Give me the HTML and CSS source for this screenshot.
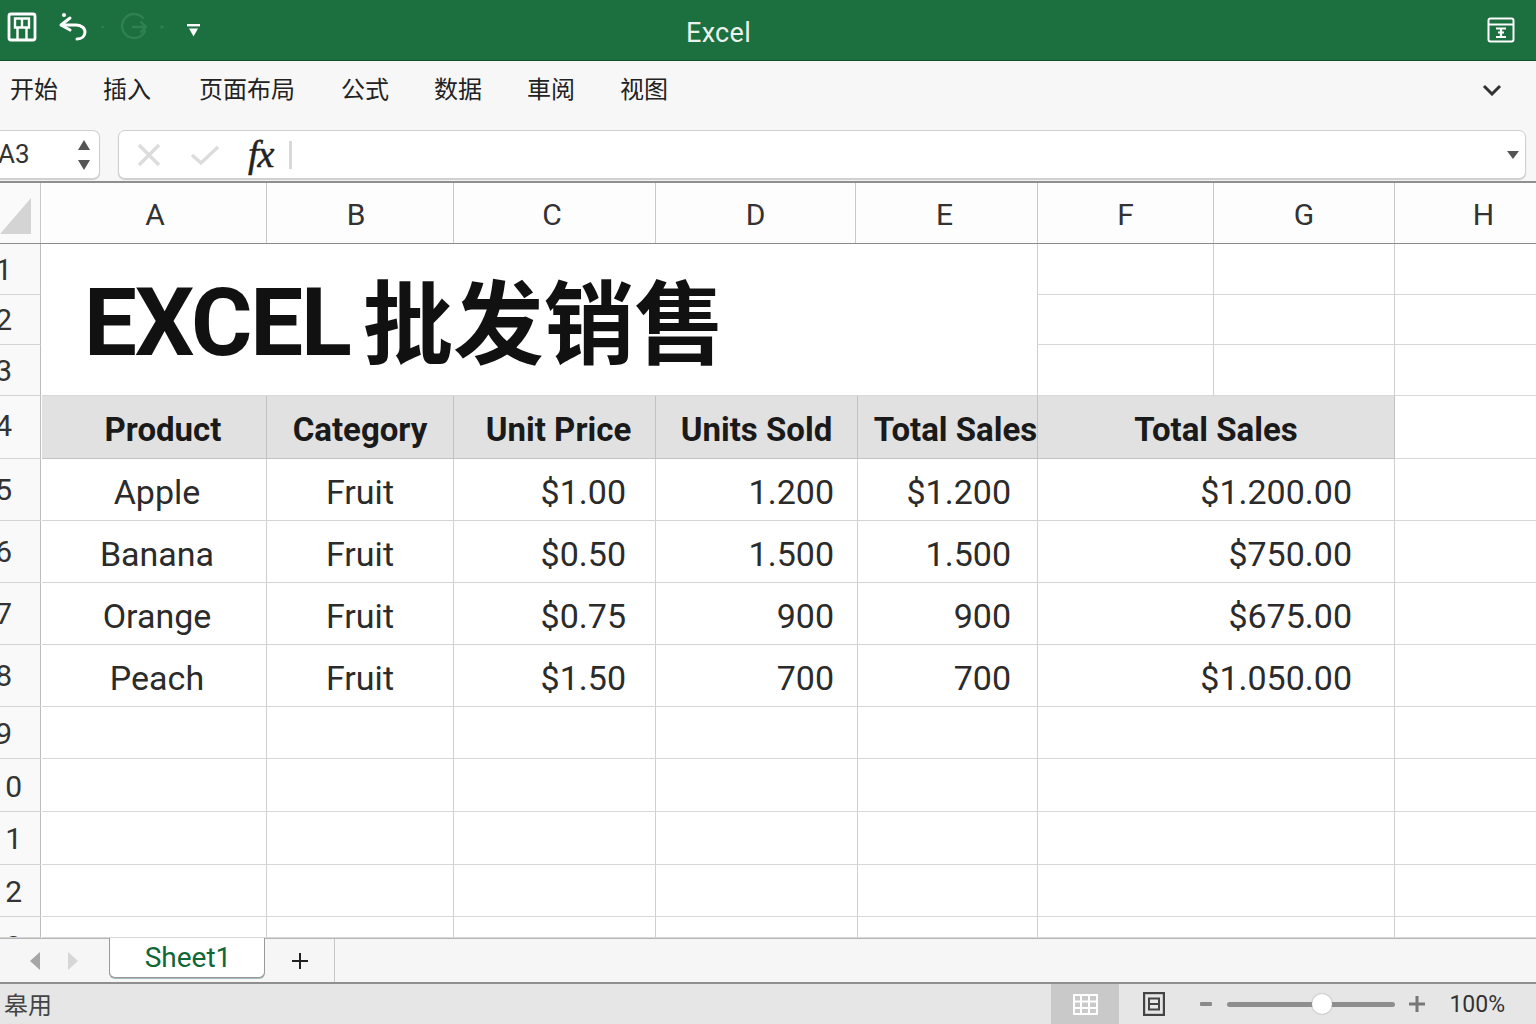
FILE: index.html
```html
<!DOCTYPE html>
<html lang="zh">
<head>
<meta charset="utf-8">
<title>Excel</title>
<link rel="stylesheet" href="styles.css">
</head>
<body>
<div class="app">
  <header class="titlebar">
    <div class="qat">
      <svg class="ic-save" width="30" height="30" viewBox="0 0 30 30" fill="none" stroke="#fff" stroke-width="2.800"><rect x="2" y="2" width="26" height="26" rx="2"/><path d="M8 6.500h14v9H8zM15 6.500v9" stroke-width="2.400"/><path d="M10.500 16v12M19.500 16v12" stroke-width="2.400"/></svg>
      <svg class="ic-undo" width="30" height="30" viewBox="0 0 30 30" fill="none" stroke="#fff" stroke-width="3" stroke-linecap="round" stroke-linejoin="round"><circle cx="6" cy="3" r="2" fill="#fff" stroke="none"/><path d="M12 6 3 13l9 5"/><path d="M4 13h14c5 0 9 3 9 7s-3 7-8 7"/></svg>
      <svg class="ic-redo" width="64" height="30" viewBox="0 0 64 30" fill="none" stroke="#2f8152" stroke-width="2.400" stroke-linecap="round"><path d="M1 15h1" stroke-width="2"/><path d="M42 6a12 12 0 1 0 2 13"/><path d="M32 15h12M40 10l5 5-5 5"/><path d="M60 14l2 1-2 1" stroke-width="1.600"/></svg>
      <svg class="ic-more" width="14" height="14" viewBox="0 0 14 14" fill="#fff"><rect x="0" y="0" width="13" height="2.400"/><path d="M2 4.500h9l-4.500 8z"/></svg>
    </div>
    <div class="appname">Excel</div>
    <svg class="ic-win" width="28" height="26" viewBox="0 0 28 26" fill="none" stroke="#fff" stroke-width="2"><rect x="1.500" y="1.500" width="25" height="23" rx="2"/><path d="M2 7.500h24"/><path d="M9 11.500h10M9 20h10M14 11.500V20M11 15.500h6" stroke-width="2.200"/></svg>
  </header>

  <nav class="ribbon">
    <span>开始</span><span>插入</span><span class="rb-wide">页面布局</span><span class="rb-nudge">公式</span><span>数据</span><span>車阅</span><span>视图</span>
    <svg class="ic-chevron" width="20" height="12" viewBox="0 0 20 12" fill="none" stroke="#333" stroke-width="3"><path d="M2 2l8 8 8-8"/></svg>
  </nav>

  <div class="formula-row">
    <div class="namebox">
      <span class="cellref">A3</span>
      <svg width="14" height="32" viewBox="0 0 14 32" fill="#555"><path d="M7 1l6 10H1zM1 21h12L7 31z"/></svg>
    </div>
    <div class="formula">
      <svg class="ic-x" width="26" height="24" viewBox="0 0 26 24" fill="none" stroke="#dcdcdc" stroke-width="3.400"><path d="M3 2l20 20M23 2 3 22"/></svg>
      <svg class="ic-check" width="30" height="20" viewBox="0 0 30 20" fill="none" stroke="#dcdcdc" stroke-width="3.400"><path d="M2 10l9 8L28 2"/></svg>
      <span class="fx">fx</span>
      <span class="caret"></span>
      <svg class="ic-drop" width="12" height="8" viewBox="0 0 12 8" fill="#555"><path d="M0 0h12L6 8z"/></svg>
    </div>
  </div>

  <div class="colheads">
    <div class="corner"><svg width="32" height="36" viewBox="0 0 32 36" fill="#d4d4d4"><path d="M31 0v36H0z"/></svg></div>
    <div class="ch a">A</div><div class="ch b">B</div><div class="ch c">C</div><div class="ch d">D</div><div class="ch e">E</div><div class="ch f">F</div><div class="ch g">G</div><div class="ch h">H</div>
  </div>

  <main class="sheet">
    <div class="rh">1</div>
    <div class="title"><span class="title-lat">EXCEL</span><span class="title-cjk">批发销售</span></div>
    <div class="gc"></div><div class="gc"></div><div class="gc nr"></div>
    <div class="rh">2</div>
    <div class="gc"></div><div class="gc"></div><div class="gc nr"></div>
    <div class="rh">3</div>
    <div class="gc"></div><div class="gc"></div><div class="gc nr"></div>

    <div class="rh up">4</div>
    <div class="hd pa">Product</div><div class="hd">Category</div><div class="hd pc">Unit Price</div><div class="hd">Units Sold</div><div class="hd pe">Total Sales</div><div class="hd span2">Total Sales</div><div class="gc nr"></div>

    <div class="rh">5</div>
    <div class="cell ctr">Apple</div><div class="cell ctr2">Fruit</div><div class="cell price">$1.00</div><div class="cell qty">1.200</div><div class="cell tot">$1.200</div><div class="cell span2 usd">$1.200.00</div><div class="gc nr"></div>
    <div class="rh">6</div>
    <div class="cell ctr">Banana</div><div class="cell ctr2">Fruit</div><div class="cell price">$0.50</div><div class="cell qty">1.500</div><div class="cell tot">1.500</div><div class="cell span2 usd">$750.00</div><div class="gc nr"></div>
    <div class="rh">7</div>
    <div class="cell ctr">Orange</div><div class="cell ctr2">Fruit</div><div class="cell price">$0.75</div><div class="cell qty">900</div><div class="cell tot">900</div><div class="cell span2 usd">$675.00</div><div class="gc nr"></div>
    <div class="rh">8</div>
    <div class="cell ctr">Peach</div><div class="cell ctr2">Fruit</div><div class="cell price">$1.50</div><div class="cell qty">700</div><div class="cell tot">700</div><div class="cell span2 usd">$1.050.00</div><div class="gc nr"></div>

    <div class="rh dn">9</div>
    <div class="gc"></div><div class="gc"></div><div class="gc"></div><div class="gc"></div><div class="gc"></div><div class="gc span2"></div><div class="gc nr"></div>
    <div class="rh two dn">10</div>
    <div class="gc"></div><div class="gc"></div><div class="gc"></div><div class="gc"></div><div class="gc"></div><div class="gc span2"></div><div class="gc nr"></div>
    <div class="rh two">11</div>
    <div class="gc"></div><div class="gc"></div><div class="gc"></div><div class="gc"></div><div class="gc"></div><div class="gc span2"></div><div class="gc nr"></div>
    <div class="rh two dn">12</div>
    <div class="gc"></div><div class="gc"></div><div class="gc"></div><div class="gc"></div><div class="gc"></div><div class="gc span2"></div><div class="gc nr"></div>
    <div class="rh two low">13</div>
    <div class="gc"></div><div class="gc"></div><div class="gc"></div><div class="gc"></div><div class="gc"></div><div class="gc span2"></div><div class="gc nr"></div>
  </main>

  <div class="tabsbar">
    <div class="tabnav">
      <svg width="12" height="18" viewBox="0 0 12 18" fill="#a6a6a6"><path d="M11 0v18L1 9z"/></svg>
      <svg width="12" height="18" viewBox="0 0 12 18" fill="#d6d6d6"><path d="M1 0v18l10-9z"/></svg>
    </div>
    <div class="tab">Sheet1</div>
    <div class="addtab">
      <svg width="16" height="16" viewBox="0 0 16 16" stroke="#222" stroke-width="2"><path d="M0 8h16M8 0v16"/></svg>
    </div>
  </div>

  <footer class="status">
    <span class="ready">皋用</span>
    <div class="viewbtn">
      <svg width="25" height="21" viewBox="0 0 25 21" fill="#fff"><path fill-rule="evenodd" d="M0 0h25v21H0zM2 2v4.500h5V2zm7 0v4.500h6V2zm8 0v4.500h6V2zM2 8.500V13h5V8.500zm7 0V13h6V8.500zm8 0V13h6V8.500zM2 15v4h5v-4zm7 0v4h6v-4zm8 0v4h6v-4z"/></svg>
    </div>
    <svg class="ic-page" width="22" height="24" viewBox="0 0 22 24" fill="none" stroke="#444" stroke-width="2.200"><rect x="1.100" y="1.100" width="19.800" height="21.800"/><rect x="6" y="6.500" width="10" height="11" stroke-width="2"/><path d="M6 12h10" stroke-width="2"/></svg>
    <div class="zoomer">
      <span class="zminus"></span>
      <div class="track"><span class="thumb"></span></div>
      <svg width="16" height="16" viewBox="0 0 16 16" stroke="#777" stroke-width="3"><path d="M0 8h16M8 0v16"/></svg>
    </div>
    <span class="pct">100%</span>
  </footer>
</div>
</body>
</html>
```

FILE: styles.css
```css
* { box-sizing: border-box; }
html, body { margin: 0; padding: 0; }
body {
  width: 1536px;
  height: 1024px;
  overflow: hidden;
  background: #fff;
  font-family: "Roboto", "Noto Sans CJK SC", sans-serif;
  color: #222;
}
.app { display: flex; flex-direction: column; height: 1024px; }

/* title bar */
.titlebar {
  flex: none;
  height: 61px;
  display: flex;
  align-items: center;
  background: #1c6f3e;
  border-bottom: 1px solid #0f4f2b;
  color: #e9f2ec;
}
.qat { display: flex; align-items: center; width: 200px; padding-left: 7px; flex: none; }
.ic-save { margin-top: -6px; flex: none; }
.ic-undo { margin-left: 21px; margin-top: -6px; flex: none; }
.ic-redo { margin-left: 13px; margin-top: -6px; flex: none; }
.ic-more { margin-left: 22px; margin-top: 2px; flex: none; }
.appname { margin-left: 486px; font-size: 27px; letter-spacing: 0.300px; line-height: 30px; margin-top: 5px; }
.ic-win { margin-left: auto; margin-right: 21px; margin-top: -1px; }

/* ribbon */
.ribbon {
  flex: none;
  height: 69px;
  display: flex;
  align-items: center;
  gap: 45px;
  padding: 0 34px 16px 10px;
  background: #f7f7f7;
  font-size: 24px;
  color: #222;
  font-family: "Noto Sans CJK SC", sans-serif;
}
.rb-wide { margin-left: 3px; }
.rb-nudge { margin-left: 1px; }
.ic-chevron { margin-left: auto; margin-top: 4px; }

/* formula row */
.formula-row {
  flex: none;
  height: 53px;
  display: flex;
  gap: 18px;
  padding-bottom: 3px;
  background: #f7f7f7;
  border-bottom: 2px solid #8f8f8f;
}
.namebox {
  width: 100px;
  height: 49px;
  display: flex;
  align-items: center;
  justify-content: space-between;
  padding-right: 8px;
  background: #fff;
  border: 1px solid #d0d0d0;
  border-left: 0;
  border-radius: 0 7px 7px 0;
  box-shadow: 0 1px 1px #ccc;
  overflow: hidden;
}
.cellref { font-size: 26px; margin-left: -2px; margin-top: -2px; color: #333; }
.formula {
  width: 1408px;
  height: 49px;
  display: flex;
  align-items: center;
  background: #fff;
  border: 1px solid #d0d0d0;
  border-radius: 7px;
  box-shadow: 0 1px 1px #ccc;
}
.ic-x { margin-left: 17px; }
.ic-check { margin-left: 28px; }
.fx {
  margin-left: 28px;
  font: italic 400 38px "Liberation Serif", serif;
  color: #222;
  -webkit-text-stroke: 0.500px #222;
  letter-spacing: -1px;
  margin-top: -2px;
  width: 29px;
}
.caret { width: 3px; height: 28px; margin-left: 12px; background: #d8d8d8; }
.ic-drop { margin-left: auto; margin-right: 6px; }

/* column heads */
.colheads {
  flex: none;
  height: 61px;
  display: grid;
  grid-template-columns: 42px 225px 187px 202px 200px 182px 176px 181px 141px;
  border-bottom: 1px solid #8c8c8c;
  background: #fff;
}
.corner {
  width: 41px;
  border-right: 1px solid #c8c8c8;
  padding-top: 15px;
  background: #fafafa;
}
.corner svg { display: block; }
.ch {
  display: flex;
  align-items: center;
  justify-content: center;
  font-size: 30px;
  color: #333;
  border-right: 1px solid #c8c8c8;
  padding-top: 2px;
  background: #fdfdfd;
}
.ch.a { padding-left: 2px; }
.ch.b { padding-right: 8px; }
.ch.c { padding-right: 5px; }
.ch.e { padding-right: 4px; }
.ch.h { border-right: 0; padding-left: 36px; }

/* sheet */
.sheet {
  flex: none;
  height: 694px;
  display: grid;
  grid-template-columns: 42px 225px 187px 202px 202px 180px 176px 181px 141px;
  grid-template-rows: 51px 50px 51px 63px 62px 62px 62px 62px 52px 53px 53px 52px 21px;
  overflow: hidden;
  font-size: 34px;
  color: #2b2b2b;
}
.rh {
  width: 41px;
  display: flex;
  align-items: center;
  justify-content: flex-end;
  padding-right: 28px;
  font-size: 30px;
  color: #333;
  background: #f9f9f9;
  border-right: 1px solid #bdbdbd;
  border-bottom: 1px solid #d4d4d4;
  overflow: hidden;
  white-space: nowrap;
}
.rh.two { padding-right: 18px; }
.rh.up { padding-bottom: 4px; }
.rh.dn { padding-top: 2px; }
.rh.low { align-items: flex-start; padding-top: 12px; }
.gc { border-right: 1px solid #d0d0d0; border-bottom: 1px solid #d8d8d8; }
.gc.nr { border-right: 0; }
.span2 { grid-column: span 2; }
.title {
  grid-column: 2 / 7;
  grid-row: 1 / 4;
  display: flex;
  align-items: center;
  padding: 6px 0 0 42px;
  border-right: 1px solid #d0d0d0;
  border-bottom: 1px solid #d8d8d8;
  color: #111;
  font-weight: 700;
}
.title-lat { font: 700 94px "Roboto", sans-serif; letter-spacing: -2.200px; }
.title-cjk { font: 700 90.500px "Noto Sans CJK SC", sans-serif; margin: -10px 0 0 13px; }
.hd {
  display: flex;
  align-items: center;
  justify-content: center;
  padding-top: 4px;
  font-size: 33px;
  font-weight: 700;
  color: #1a1a1a;
  background: #e1e1e1;
  border-right: 1px solid #c2c2c2;
  border-bottom: 1px solid #c2c2c2;
  white-space: nowrap;
}
.hd.pa { padding-left: 18px; }
.hd.pc { padding-left: 8px; }
.hd.pe { padding-left: 16px; }
.cell {
  display: flex;
  align-items: center;
  padding-top: 5px;
  border-right: 1px solid #d0d0d0;
  border-bottom: 1px solid #d4d4d4;
  white-space: nowrap;
}
.ctr { justify-content: center; padding-left: 6px; }
.ctr2 { justify-content: center; }
.price, .qty, .tot, .usd { justify-content: flex-end; }
.price { padding-right: 29px; }
.qty { padding-right: 23px; }
.tot { padding-right: 26px; }
.usd { padding-right: 42px; }

/* sheet tabs */
.tabsbar {
  flex: none;
  height: 46px;
  display: flex;
  background: #f6f6f6;
  border-top: 1px solid #b5b5b5;
  border-bottom: 2px solid #8f8f8f;
}
.tabnav { width: 109px; display: flex; align-items: center; gap: 26px; padding: 0 0 0 29px; }
.tab {
  width: 156px;
  height: 40px;
  margin-top: -1px;
  display: flex;
  align-items: center;
  justify-content: center;
  padding-left: 2px;
  background: #fff;
  border: 1px solid #9a9a9a;
  border-top: 0;
  border-radius: 0 0 6px 6px;
  color: #0f6636;
  font-size: 28px;
  box-shadow: 0 1px 0 #9bb;
}
.addtab {
  width: 70px;
  display: flex;
  align-items: center;
  justify-content: center;
  border-right: 1px solid #c8c8c8;
}

/* status bar */
.status {
  flex: 1;
  display: flex;
  align-items: center;
  background: #e6e6e6;
  color: #333;
  overflow: hidden;
}
.ready { font-size: 24px; margin-left: 4px; margin-top: -2px; font-family: "Noto Sans CJK SC", sans-serif; color: #444; }
.viewbtn {
  margin-left: auto;
  width: 68px;
  height: 100%;
  display: flex;
  align-items: center;
  justify-content: center;
  background: #c9c9c9;
}
.ic-page { margin-left: 24px; }
.zoomer { display: flex; align-items: center; margin-left: 35px; }
.zminus { width: 12px; height: 4px; background: #8a8a8a; border-radius: 1px; }
.track { width: 168px; height: 5px; margin: 0 14px 0 15px; background: #8e8e8e; border-radius: 3px; position: relative; }
.thumb {
  position: absolute;
  left: 85px;
  top: -8px;
  width: 20px;
  height: 20px;
  border-radius: 50%;
  background: #fff;
  box-shadow: 0 0 2px #999;
}
.pct { font-size: 23px; margin-left: 24px; margin-right: 31px; color: #333; }
```
